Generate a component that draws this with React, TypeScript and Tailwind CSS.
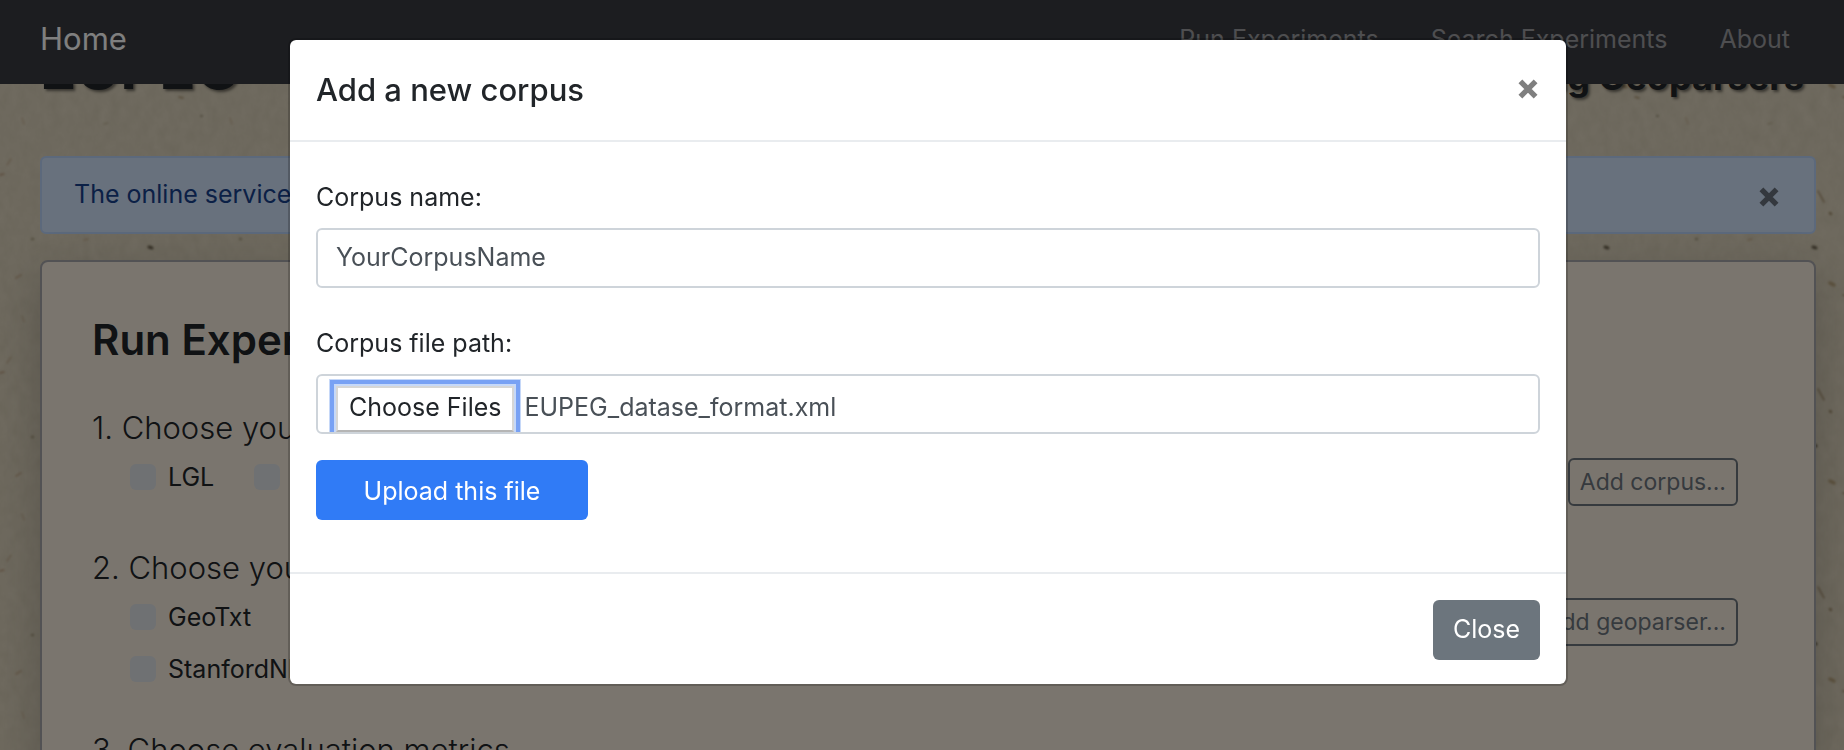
import { useEffect, useRef, useState } from "react";

const corpora = ["LGL", "GeoVirus", "TR-News", "GeoWebNews", "WikToR", "GeoCorpora"];
const geoparserRows = [
  ["GeoTxt", "Edinburgh Geoparser", "TopoCluster", "CLAVIN"],
  ["StanfordNER + Population", "SpaCy NER + Population", "DBpedia Spotlight"],
];

function CrossIcon() {
  return (
    <svg viewBox="0 0 20 20" className="size-5" aria-hidden="true">
      <path d="M2.4 2.4 17.6 17.6M17.6 2.4 2.4 17.6" stroke="currentColor" strokeWidth="5.4" fill="none" />
    </svg>
  );
}

function PaperTexture() {
  return (
    <svg className="absolute inset-0 size-full" aria-hidden="true">
      <defs>
        <filter id="grain" x="0" y="0" width="100%" height="100%">
          <feTurbulence type="fractalNoise" baseFrequency="0.1 0.07" numOctaves="4" seed="7" />
          <feColorMatrix values="0 0 0 0 0.42  0 0 0 0 0.38  0 0 0 0 0.26  0.22 0.16 0 0 -0.1" />
        </filter>
        <filter id="soft">
          <feGaussianBlur stdDeviation="0.8" />
        </filter>
        <pattern id="specks" width="208" height="198" patternUnits="userSpaceOnUse">
          <g filter="url(#soft)" fill="none" strokeLinecap="round">
            <path d="M149 49l3 1" stroke="#6a604c" strokeWidth="3" />
            <path d="M179 97l4 1" stroke="#a8916c" strokeWidth="1.5" />
            <path d="M154 191l6 11" stroke="#a48e6c" strokeWidth="1.5" />
            <path d="M154 -7l6 11" stroke="#a48e6c" strokeWidth="1.5" />
            <path d="M166 15l1 1" stroke="#a08e6c" strokeWidth="2.5" />
            <path d="M166 85l4 2" stroke="#b8a27c" strokeWidth="3.5" />
            <path d="M16 80l5 -3" stroke="#c6ae90" strokeWidth="2" />
            <path d="M0 175l4 -1" stroke="#b8987a" strokeWidth="1.5" />
            <path d="M32 41l1 0" stroke="#aaa083" strokeWidth="2.5" />
            <path d="M201 116l1 0" stroke="#a0967c" strokeWidth="2" />
            <path d="M22 118l2 6" stroke="#cbb99c" strokeWidth="1.5" />
            <path d="M84 42l4 -1" stroke="#c6ae90" strokeWidth="1.5" />
            <path d="M104 124l4 -1" stroke="#c0b598" strokeWidth="1.5" />
            <path d="M7 165l4 -6" stroke="#c6b294" strokeWidth="1.5" />
          </g>
        </pattern>
      </defs>
      <rect width="100%" height="100%" filter="url(#grain)" />
      <rect width="100%" height="100%" fill="url(#specks)" />
    </svg>
  );
}

function Check({ label }: { label: string }) {
  return (
    <label className="flex shrink-0 items-center gap-3 text-[25px] leading-[38px]">
      <input type="checkbox" className="size-[26px] appearance-none rounded-md bg-[#dee2e6] checked:bg-[#007bff]" />
      {label}
    </label>
  );
}

function AddButton({ children }: { children: string }) {
  return (
    <button className="absolute top-[56px] right-0 h-12 rounded-md border-2 border-[#6c757d] px-[10px] text-[23px] leading-8 text-[#6c757d]">
      {children}
    </button>
  );
}

export default function App() {
  const fileRef = useRef<HTMLInputElement>(null);
  const [name, setName] = useState("YourCorpusName");

  useEffect(() => {
    const transfer = new DataTransfer();
    transfer.items.add(new File(["<corpus/>"], "EUPEG_datase_format.xml", { type: "text/xml" }));
    if (fileRef.current) fileRef.current.files = transfer.files;
  }, []);

  return (
    <div className="relative h-screen overflow-hidden bg-[#e0d6c0] font-[Inter,'Liberation_Sans',sans-serif] text-[#212529]">
      <PaperTexture />

      <nav className="relative z-10 flex h-[84px] items-center justify-between bg-[#393b41] pr-[54px] pb-[6px] pl-10">
        <a href="#home" className="text-[31px] leading-[46px] text-white">Home</a>
        <div className="flex gap-[52px] text-[25px] leading-[38px] whitespace-nowrap text-white/50">
          <a href="#run">Run Experiments</a>
          <a href="#search">Search Experiments</a>
          <a href="#about">About</a>
        </div>
      </nav>

      <main className="relative -mt-16 flex flex-col pr-7 pl-10">
        <header className="flex h-[136px] items-start justify-between font-bold whitespace-nowrap [text-shadow:2px_2px_3px_rgba(0,0,0,0.5)]">
          <h1 className="text-[60px] leading-[94px]">EUPEG</h1>
          <p className="pr-3 text-[36px] leading-[114px]">An Extensible and Unified Platform for Evaluating Geoparsers</p>
        </header>

        <div className="flex h-[78px] items-center justify-between rounded-md border-2 border-[#b8d2f8] bg-[#d0e2fa] pr-[35px] pl-8 text-[25px] text-[#16408c]">
          <span>The online service</span>
          <button aria-label="Dismiss" className="pt-1 text-black/50"><CrossIcon /></button>
        </div>

        <section className="mt-[26px] rounded-lg border-2 border-[#a5a4a8] bg-[#f5ebdd] pt-[50px] pr-[76px] pb-12 pl-[50px] shadow-[0_16px_48px_rgba(0,0,0,0.2)]">
          <h2 className="text-[42px] leading-[56px] font-semibold">Run Experiments</h2>

          <div className="relative mt-[34px] h-[140px]">
            <h3 className="pt-[2px] text-[31px] leading-[48px] font-light">1. Choose your corpora</h3>
            <div className="mt-[6px] flex gap-10 overflow-hidden pl-[38px]">
              {corpora.map((item) => <Check key={item} label={item} />)}
            </div>
            <AddButton>Add corpus...</AddButton>
          </div>

          <div className="relative h-[182px]">
            <h3 className="pt-[2px] text-[31px] leading-[48px] font-light">2. Choose your geoparsers</h3>
            <div className="mt-[6px] flex flex-col gap-[14px] pl-[38px]">
              {geoparserRows.map((row) => (
                <div key={row[0]} className="flex gap-10">
                  {row.map((item) => <Check key={item} label={item} />)}
                </div>
              ))}
            </div>
            <AddButton>Add geoparser...</AddButton>
          </div>

          <h3 className="pt-[2px] text-[31px] leading-[48px] font-light">3. Choose evaluation metrics</h3>
        </section>
      </main>

      <div className="fixed inset-0 z-20 flex items-start justify-center bg-black/50 pt-[38px] pl-3">
        <div role="dialog" aria-modal="true" aria-labelledby="dialog-title" className="w-full max-w-[1280px] rounded-lg border-2 border-black/20 bg-white bg-clip-padding">
          <div className="flex items-center justify-between border-b-2 border-[#e9ecef] px-[26px] py-[27px]">
            <h4 id="dialog-title" className="text-[31px] leading-[46px] font-medium">Add a new corpus</h4>
            <button aria-label="Close dialog" className="pr-[2px] pb-[2px] text-[#7f7f7f]"><CrossIcon /></button>
          </div>

          <form className="flex flex-col items-start px-[26px] pt-9 pb-[52px] text-[25px] leading-[38px]" onSubmit={(e) => e.preventDefault()}>
            <label htmlFor="corpus-name">Corpus name:</label>
            <input
              id="corpus-name"
              type="text"
              value={name}
              onChange={(e) => setName(e.target.value)}
              className="mt-3 h-[60px] w-full rounded-md border-2 border-[#ced4da] px-[18px] pb-[2px] text-[#495057] outline-none"
            />
            <label htmlFor="corpus-file" className="mt-9">Corpus file path:</label>
            <input
              id="corpus-file"
              ref={fileRef}
              type="file"
              multiple
              className="mt-3 h-[60px] w-full rounded-md border-2 border-[#ced4da] px-[18px] py-[10px] text-[#495057] outline-none file:mr-[10px] file:h-[46px] file:border-2 file:border-solid file:border-[#d6d6d6] file:border-b-[#b5b5b5] file:bg-white file:px-[11px] file:pb-1 file:text-[#212529] file:shadow-[0_0_0_2px_#c6d8f8,0_0_0_6px_#78a1f4,0_0_0_7px_#c6d8f8]"
            />
            <button type="submit" className="mt-[26px] h-[60px] w-[272px] rounded-md bg-[#307bf6] pt-[2px] text-white">Upload this file</button>
          </form>

          <div className="flex justify-end border-t-2 border-[#e9ecef] px-[26px] pt-[26px] pb-6">
            <button className="h-[60px] rounded-md bg-[#6c757d] px-5 pb-[2px] text-[25px] leading-[38px] text-white">Close</button>
          </div>
        </div>
      </div>
    </div>
  );
}
